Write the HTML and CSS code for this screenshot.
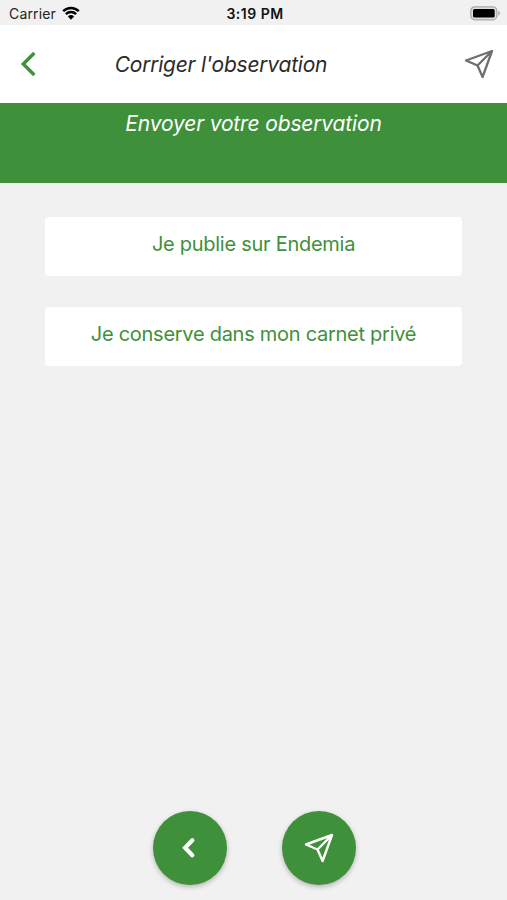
FILE: index.html
```html
<!DOCTYPE html>
<html lang="fr">
<head>
  <meta charset="UTF-8">
  <meta name="viewport" content="width=device-width, initial-scale=1.0">
  <title>Corriger l'observation</title>
  <link rel="stylesheet" href="styles.css">
</head>
<body>
<div class="screen">
  <div class="status-bar">
    <div class="carrier">
      <span>Carrier</span>
      <svg class="wifi" width="18" height="14" viewBox="0 0 18 14">
        <path d="M1.2 5.1a11.2 11.2 0 0 1 15.6 0M3.9 8.1a7.3 7.3 0 0 1 10.2 0" fill="none" stroke="#000" stroke-width="2.4"/>
        <path d="M9 13.7L5.9 10.5a4.5 4.5 0 0 1 6.2 0z"/>
      </svg>
    </div>
    <span class="time">3:19 PM</span>
    <svg class="battery" width="31" height="15" viewBox="0 0 31 15">
      <rect x=".8" y=".8" width="26" height="13" rx="4" fill="#dedede" stroke="#a9a9a9" stroke-width="1.3"/>
      <rect x="3" y="3" width="21.7" height="8.6" rx="1.5"/>
      <path d="M28.3 4.8c2.2.8 2.2 4.2 0 5z" fill="#a9a9a9"/>
    </svg>
  </div>

  <header class="header">
    <svg class="back" width="16" height="26" viewBox="0 0 16 26">
      <path d="M14.3 2L3.3 13l11 11" fill="none" stroke="#3f903a" stroke-width="3.4"/>
    </svg>
    <h1>Corriger l'observation</h1>
    <svg class="send" width="30" height="30" viewBox="0 0 30 30">
      <path d="M2 11.5L28 2l-9.4 26-5.1-11.5zM13.5 16.5L28 2" fill="none" stroke="#6f6f6f" stroke-width="2.3" stroke-linejoin="round"/>
    </svg>
  </header>

  <div class="banner">Envoyer votre observation</div>

  <main class="choices">
    <button class="choice">Je publie sur Endemia</button>
    <button class="choice">Je conserve dans mon carnet privé</button>
  </main>

  <footer class="actions">
    <button class="fab" aria-label="Retour">
      <svg width="30" height="30" viewBox="0 0 30 30">
        <path d="M17.3 7.3L10.1 14.8l7.2 7.5" fill="none" stroke="#fff" stroke-width="4.2" stroke-linecap="round" stroke-linejoin="miter"/>
      </svg>
    </button>
    <button class="fab" aria-label="Envoyer">
      <svg width="30" height="30" viewBox="0 0 30 30">
        <path d="M2 11.5L28 2l-9.4 26-5.1-11.5zM13.5 16.5L28 2" fill="none" stroke="#fff" stroke-width="2.4" stroke-linejoin="round"/>
      </svg>
    </button>
  </footer>
</div>
</body>
</html>
```
FILE: styles.css
```css
body {
  margin: 0;
  font-family: Inter, "Liberation Sans", sans-serif;
  background-color: #f1f1f1;
}
svg {
  display: block;
}
.screen {
  display: flex;
  flex-direction: column;
  height: 900px;
}
.status-bar {
  display: grid;
  grid-template-columns: 1fr auto 1fr;
  align-items: center;
  box-sizing: border-box;
  height: 25px;
  padding: 2px 6px 0 9px;
  font-size: 14px;
  color: #222;
}
.carrier {
  display: flex;
  align-items: center;
  gap: 6px;
  letter-spacing: 0.15px;
}
.wifi {
  margin-top: -2px;
}
.time {
  font-weight: 600;
  letter-spacing: 0.5px;
  color: #111;
}
.battery {
  justify-self: end;
  margin-top: -1px;
}
.header {
  display: flex;
  align-items: center;
  justify-content: space-between;
  box-sizing: border-box;
  height: 78px;
  padding: 0 13px 0 20px;
  background-color: #fff;
}
.header h1 {
  margin: 0 0 0 -58px;
  font-size: 21px;
  font-weight: 400;
  font-style: italic;
  letter-spacing: -0.23px;
  color: #2b2b2b;
}
.banner {
  box-sizing: border-box;
  height: 80px;
  padding-top: 8px;
  background-color: #3f903a;
  color: #fff;
  font-size: 21px;
  line-height: 26px;
  font-style: italic;
  letter-spacing: -0.15px;
  text-align: center;
}
.choices {
  display: flex;
  flex-direction: column;
  gap: 31px;
  padding: 34px 45px 0;
}
.choice {
  height: 59px;
  padding: 0 0 5px;
  border: none;
  border-radius: 4px;
  background-color: #fff;
  color: #3f903a;
  font-family: inherit;
  font-size: 20px;
  letter-spacing: -0.27px;
}
.actions {
  display: flex;
  justify-content: center;
  gap: 55px;
  margin-top: auto;
  padding: 0 0 15px 1px;
}
.fab {
  display: flex;
  align-items: center;
  justify-content: center;
  width: 74px;
  height: 74px;
  padding: 0;
  border: none;
  border-radius: 50%;
  background-color: #3f903a;
  box-shadow: 0 2px 5px rgba(0,0,0,0.25);
}
```
